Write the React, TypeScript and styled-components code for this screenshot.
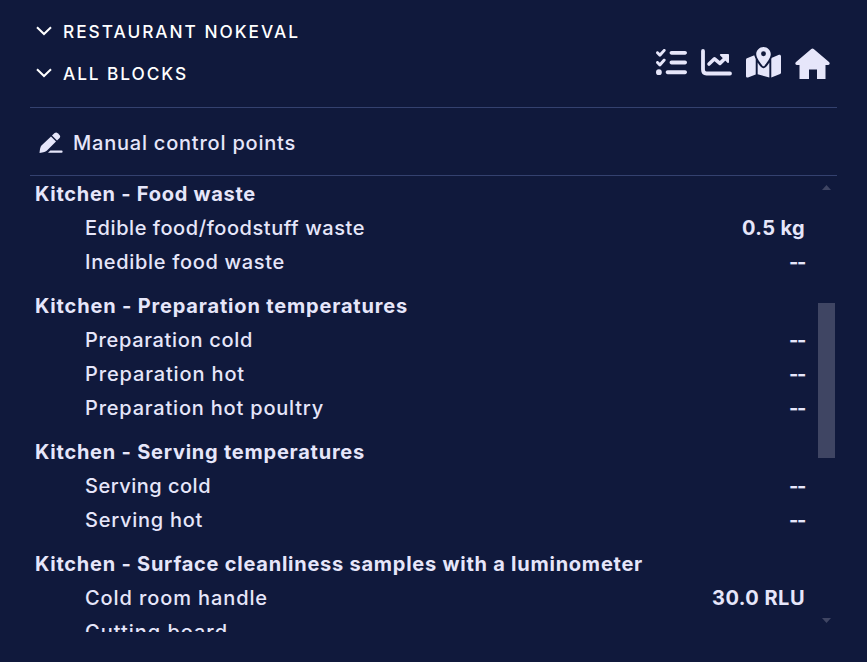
import React, { useLayoutEffect, useRef, useState } from "react";
import styled, { createGlobalStyle } from "styled-components";
import { FaListCheck, FaMapLocationDot } from "react-icons/fa6";

const GlobalStyle = createGlobalStyle`
  * { box-sizing: border-box; }
  body {
    margin: 0;
    background: #10193c;
    color: #e6e6fa;
    font-family: Inter, "Liberation Sans", sans-serif;
    overflow: hidden;
  }
`;

const Page = styled.main`
  width: 867px;
  height: 662px;
  padding: 10px 30px 0;
  display: flex;
  flex-direction: column;
  overflow: hidden;
`;

const Header = styled.header`
  height: 98px;
  flex: none;
  display: flex;
  justify-content: space-between;
  border-bottom: 1px solid #34416f;
`;

const Filters = styled.div`
  display: flex;
  flex-direction: column;
  padding-left: 6px;
`;

const Filter = styled.div`
  display: flex;
  align-items: center;
  gap: 11px;
  height: 42px;
  color: #fff;
  font-size: 17.3px;
  font-weight: 500;
`;

const Toolbar = styled.nav`
  display: flex;
  align-items: flex-start;
  padding: 37px 7px 0 0;
  gap: 14px;
  height: 80px;
  svg { display: block; flex: none; }
`;

const Title = styled.div`
  height: 68px;
  flex: none;
  display: flex;
  align-items: center;
  gap: 10px;
  padding: 2px 0 0 9px;
  border-bottom: 1px solid #34416f;
  font-size: 20px;
  font-weight: 450;
`;

const ListArea = styled.section`
  display: flex;
  height: 456px;
  overflow: hidden;
`;

const List = styled.div`
  flex: 1;
  padding: 1px 13px 0 5px;
`;

const Group = styled.div`
  margin-bottom: 10px;
`;

const GroupName = styled.div`
  height: 34px;
  line-height: 34px;
  font-size: 20px;
  font-weight: 700;
`;

const Row = styled.div`
  display: flex;
  justify-content: space-between;
  height: 34px;
  line-height: 34px;
  padding-left: 50px;
  font-size: 20px;
  font-weight: 450;
`;

const Value = styled.span`
  font-weight: 700;
`;

const Scrollbar = styled.div`
  width: 17px;
  margin-right: 2px;
  display: flex;
  flex-direction: column;
  align-items: center;
`;

const Arrow = styled.div<{ $down?: boolean }>`
  width: 9px;
  height: 5px;
  flex: none;
  margin-top: ${(p) => (p.$down ? "160px" : "9px")};
  background: #3f4563;
  clip-path: ${(p) => (p.$down ? "polygon(0 0, 100% 0, 50% 100%)" : "polygon(50% 0, 100% 100%, 0 100%)")};
`;

const Thumb = styled.div`
  width: 17px;
  height: 155px;
  flex: none;
  margin-top: 113px;
  background: #3f4563;
`;

const Label = styled.span`
  display: inline-block;
  white-space: nowrap;
`;

/** Text whose tracking is adjusted so that it spans a given width. */
function Tracked({ text, width }: { text: string; width: number }) {
  const ref = useRef<HTMLSpanElement>(null);
  const [spacing, setSpacing] = useState(0);
  useLayoutEffect(() => {
    const natural = ref.current!.getBoundingClientRect().width;
    setSpacing((width - natural) / text.length);
  }, [text, width]);
  return <Label ref={ref} style={{ letterSpacing: spacing }}>{text}</Label>;
}

const Chevron = () => (
  <svg width="16" height="10" viewBox="0 0 16 10" fill="none" stroke="#fff" strokeWidth="2">
    <path d="M1 1.2 8 8l7-6.8" />
  </svg>
);

const ChartIcon = () => (
  <svg width="31" height="29" viewBox="0 0 31 29" fill="none" stroke="currentColor" strokeWidth="3.8" strokeLinecap="round" strokeLinejoin="round">
    <path d="M2 4v18.500q0 4 3.500 4H29" />
    <path d="m8 17 5.500-5.200 5.400 4.600L24.500 11" strokeWidth="3.600" />
    <path d="M19.800 7.800h7.300v7.300z" fill="currentColor" strokeWidth="1.800" />
  </svg>
);

const HomeIcon = () => (
  <svg width="35" height="32" viewBox="0 0 35 32" fill="currentColor">
    <path d="M16.300 2q1.200-1 2.400 0L34 15q1 .9.600 2-.400 1-1.600 1h-2.500v14H22V22.500h-8V32H4.500V18H2Q.8 18 .4 17 0 15.900 1 15z" />
  </svg>
);

const PinMap = styled(FaMapLocationDot)`
  margin-top: -2px;
`;

const PencilIcon = () => (
  <svg width="24" height="22" viewBox="0 0 24 22" fill="currentColor">
    <path d="M12 4.600 17 9.500 8 18.500Q6.500 20 .5 21q.5-6 2-7.500z" />
    <path d="M13 3.600 15.600 1.100q1.600-1.200 3.100.1l1.800 1.800q1.300 1.500.1 3L18 8.500z" />
    <path d="M11.300 18.600H22.600q1 0 1 1.100t-1 1.100H9z" />
  </svg>
);

interface Point { name: string; width: number; value: string; valueWidth: number }
interface PointGroup { name: string; width: number; points: Point[] }

const groups: PointGroup[] = [
  { name: "Kitchen - Food waste", width: 221, points: [
    { name: "Edible food/foodstuff waste", width: 280, value: "0.5 kg", valueWidth: 63 },
    { name: "Inedible food waste", width: 200, value: "--", valueWidth: 16 },
  ] },
  { name: "Kitchen - Preparation temperatures", width: 373, points: [
    { name: "Preparation cold", width: 168, value: "--", valueWidth: 16 },
    { name: "Preparation hot", width: 160, value: "--", valueWidth: 16 },
    { name: "Preparation hot poultry", width: 239, value: "--", valueWidth: 16 },
  ] },
  { name: "Kitchen - Serving temperatures", width: 330, points: [
    { name: "Serving cold", width: 126, value: "--", valueWidth: 16 },
    { name: "Serving hot", width: 118, value: "--", valueWidth: 16 },
  ] },
  { name: "Kitchen - Surface cleanliness samples with a luminometer", width: 608, points: [
    { name: "Cold room handle", width: 183, value: "30.0 RLU", valueWidth: 93 },
    { name: "Cutting board", width: 143, value: "", valueWidth: 0 },
  ] },
];

export default function App() {
  return (
    <Page>
      <GlobalStyle />
      <Header>
        <Filters>
          <Filter><Chevron /><Tracked text="RESTAURANT NOKEVAL" width={237} /></Filter>
          <Filter><Chevron /><Tracked text="ALL BLOCKS" width={125} /></Filter>
        </Filters>
        <Toolbar>
          <FaListCheck size={31} />
          <ChartIcon />
          <PinMap size={35} />
          <HomeIcon />
        </Toolbar>
      </Header>
      <Title><PencilIcon /><Tracked text="Manual control points" width={223} /></Title>
      <ListArea>
        <List>
          {groups.map((g) => (
            <Group key={g.name}>
              <GroupName><Tracked text={g.name} width={g.width} /></GroupName>
              {g.points.map((p) => (
                <Row key={p.name}>
                  <Tracked text={p.name} width={p.width} />
                  {p.value && <Value><Tracked text={p.value} width={p.valueWidth} /></Value>}
                </Row>
              ))}
            </Group>
          ))}
        </List>
        <Scrollbar><Arrow /><Thumb /><Arrow $down /></Scrollbar>
      </ListArea>
    </Page>
  );
}
